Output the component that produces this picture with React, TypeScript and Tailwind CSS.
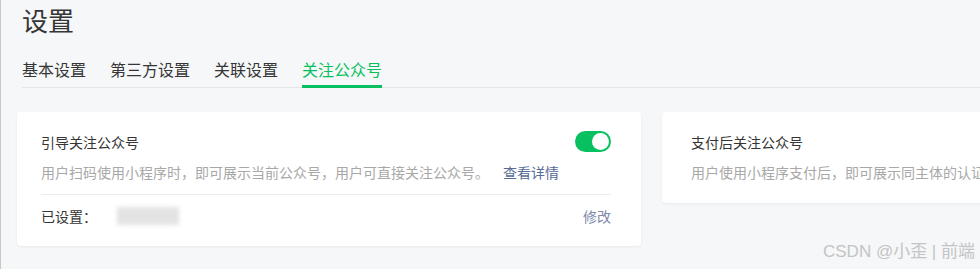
import React from "react";

const font = { fontFamily: '"Noto Sans CJK SC", "Noto Sans", sans-serif' };

export default function App() {
  return (
    <div
      className="w-[980px] h-[269px] overflow-hidden bg-[#f6f7f9] border-l border-[#c8c8c8] relative"
      style={font}
    >
      <div className="pl-[21px] pt-[2px]">
        <h1 className="text-[26px] leading-[36px] text-[#353535] font-normal">设置</h1>
        <div className="mt-[20px] flex border-b border-[#e4e6ea]">
          {["基本设置", "第三方设置", "关联设置", "关注公众号"].map((t, i) => (
            <div
              key={t}
              className={
                "mr-[24px] text-[16px] leading-[22px] pb-[5px] border-b-[3px] -mb-[1px] " +
                (i === 3 ? "text-[#07c160] border-[#07c160]" : "text-[#353535] border-transparent")
              }
            >
              {t}
            </div>
          ))}
        </div>
      </div>
      <div className="flex gap-[21px] pl-[16px] mt-[24px] items-start">
        <div className="w-[624px] shrink-0 bg-white rounded-[4px] shadow-[0_1px_3px_rgba(0,0,0,0.06)] pl-[24px] pr-[30px] pt-[18px] pb-[19px]">
          <div className="flex items-center justify-between h-[24px]">
            <span className="text-[14px] text-[#353535]">引导关注公众号</span>
            <div className="w-[36px] h-[21px] rounded-full bg-[#07c160] relative mt-[-2px]">
              <div className="absolute right-[2px] top-[2px] w-[17px] h-[17px] rounded-full bg-white" />
            </div>
          </div>
          <div className="mt-[8px] text-[14px] leading-[20px] text-[#a8a8a8] whitespace-nowrap">
            用户扫码使用小程序时，即可展示当前公众号，用户可直接关注公众号。
            <span className="text-[#576b95] ml-[14px]">查看详情</span>
          </div>
          <div className="mt-[12px] border-t border-[#ebebeb]" />
          <div className="flex items-center justify-between mt-[10px] h-[22px]">
            <div className="flex items-center">
              <span className="text-[14px] text-[#353535]">已设置：</span>
              <div className="ml-[20px] w-[62px] h-[18px] bg-[#e3e3e3] blur-[2px]" />
            </div>
            <span className="text-[14px] text-[#7d8aa8]">修改</span>
          </div>
        </div>
        <div className="w-[330px] shrink-0 bg-white rounded-[4px] shadow-[0_1px_3px_rgba(0,0,0,0.06)] pl-[29px] pt-[18px] pb-[21px] whitespace-nowrap overflow-hidden">
          <div className="h-[24px] flex items-center text-[14px] text-[#353535]">支付后关注公众号</div>
          <div className="mt-[8px] text-[14px] leading-[20px] text-[#a8a8a8]">
            用户使用小程序支付后，即可展示同主体的认证公众号
          </div>
        </div>
      </div>
      <div
        className="absolute right-[5px] top-[239px] text-[17px] text-[#c4c4c4]"
        style={{ fontFamily: '"Liberation Sans", "Noto Sans CJK SC", sans-serif' }}
      >
        CSDN @小歪 | 前端
      </div>
    </div>
  );
}
